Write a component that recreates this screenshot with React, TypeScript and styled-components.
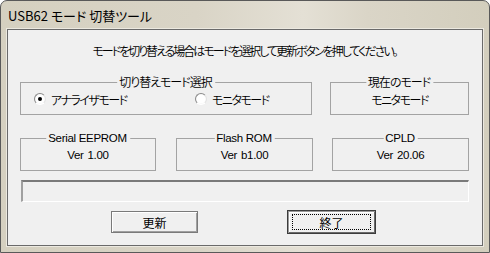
import React from 'react';
import styled, { createGlobalStyle } from 'styled-components';

const GlobalStyle = createGlobalStyle`
  html, body {
    margin: 0;
    padding: 0;
    background: #ffffff;
  }
  body {
    font-family: "Liberation Sans", "Noto Sans CJK JP", sans-serif;
    font-size: 12px;
    color: #000000;
  }
`;

const cjk = `
  font-family: "Noto Sans CJK JP", sans-serif;
  font-feature-settings: 'palt';
  font-weight: 350;
  font-size: 12px;
  letter-spacing: -1.5px;
`;

const latin = `
  font-family: "Liberation Sans", sans-serif;
  font-weight: 400;
  font-size: 11.5px;
  letter-spacing: -0.3px;
`;

const Window = styled.div`
  width: 490px;
  height: 253px;
  box-sizing: border-box;
  border: 1px solid #595959;
  border-radius: 7px 7px 0 0;
  background: linear-gradient(
    to right,
    #d5d0c0 0%,
    #d9d4c6 40%,
    #e4e0d5 62%,
    #dad5c7 75%,
    #d3cebd 100%
  );
  display: flex;
  flex-direction: column;
  overflow: hidden;
`;

const TitleBar = styled.div`
  height: 28px;
  display: flex;
  align-items: center;
  padding-left: 7px;
  font-family: "Noto Sans CJK JP", sans-serif;
  font-feature-settings: 'palt';
  font-size: 13px;
  color: #000;
`;

const Client = styled.div`
  flex: 1;
  margin: 0 6px 6px 6px;
  border: 1px solid #6a6a6a;
  box-shadow: 0 0 0 1px #ece9e0;
  background: #f0f0f0;
  display: flex;
  flex-direction: column;
  padding: 14px 13px 0 12px;
  ${cjk}
`;

const Message = styled.div`
  height: 14px;
  line-height: 14px;
  text-align: center;
  letter-spacing: -2px;
`;

const Row = styled.div<{ $top: number }>`
  display: flex;
  margin-top: ${(p) => p.$top}px;
`;

const GroupBox = styled.div<{ $width: number; $gap?: number }>`
  position: relative;
  width: ${(p) => p.$width}px;
  height: 33px;
  box-sizing: border-box;
  margin-left: ${(p) => p.$gap ?? 0}px;
  border: 1px solid #a3a3a3;
  display: flex;
  align-items: center;
  justify-content: center;
`;

const Caption = styled.span<{ $latin?: boolean }>`
  position: absolute;
  top: -8px;
  left: 50%;
  transform: translateX(-50%);
  padding: 0 3px 0 2px;
  background: #f0f0f0;
  line-height: 14px;
  white-space: nowrap;
  ${(p) => (p.$latin ? latin : `${cjk} letter-spacing: -1px;`)}
`;

const Value = styled.span<{ $latin?: boolean }>`
  padding-top: 1px;
  word-spacing: 1px;
  ${(p) => (p.$latin ? latin : cjk)}
`;

const RadioRow = styled.div`
  width: 100%;
  display: grid;
  grid-template-columns: 161px auto;
  padding-left: 13px;
  padding-top: 1px;
`;

const RadioItem = styled.label`
  display: flex;
  align-items: center;
  gap: 5px;
`;

const RadioCircle = styled.span<{ $checked: boolean }>`
  width: 12px;
  height: 12px;
  box-sizing: border-box;
  border-radius: 50%;
  border: 1px solid;
  border-color: #8a8a8a #e2e2e2 #ffffff #8a8a8a;
  background: radial-gradient(circle at 50% 50%, #ffffff 0 55%, #e4e4e4 100%);
  display: flex;
  align-items: center;
  justify-content: center;

  &::after {
    content: '';
    width: 4px;
    height: 4px;
    border-radius: 50%;
    background: ${(p) => (p.$checked ? '#000' : 'transparent')};
  }
`;

const StatusField = styled.div`
  margin: 9px 0 0 1px;
  width: 448px;
  height: 22px;
  box-sizing: border-box;
  border-style: solid;
  border-width: 2px 1px 1px 2px;
  border-color: #7a7a7a #ffffff #ffffff #a0a0a0;
  background: #f0f0f0;
`;

const ButtonRow = styled.div`
  display: flex;
  align-items: center;
  gap: 90px;
  margin-top: 8px;
  padding-left: 91px;
`;

const Button = styled.button<{ $default?: boolean }>`
  width: ${(p) => (p.$default ? 89 : 87)}px;
  height: ${(p) => (p.$default ? 24 : 22)}px;
  box-sizing: border-box;
  margin: ${(p) => (p.$default ? '0 0 0 -1px' : '0')};
  padding: 0;
  border: 1px solid ${(p) => (p.$default ? '#3c3c3c' : '#7a7a7a')};
  box-shadow: ${(p) =>
    p.$default
      ? 'inset 1px 1px 0 #9a9a9a, inset -1px -1px 0 #6a6a6a, inset 2px 2px 0 #ffffff'
      : 'inset 1px 1px 0 #ffffff, inset -1px -1px 0 #a0a0a0'};
  background: #f0f0f0;
  font-family: "Noto Sans CJK JP", sans-serif;
  font-weight: 400;
  font-size: 12px;
  letter-spacing: 0;
  color: #000;
  display: flex;
  align-items: center;
  justify-content: center;
`;

const FocusRect = styled.span`
  width: 79px;
  height: 16px;
  box-sizing: border-box;
  border: 1px dotted #000;
  display: flex;
  align-items: center;
  justify-content: center;
`;

export default function App(): JSX.Element {
  return (
    <>
      <GlobalStyle />
      <Window>
        <TitleBar>USB62 モード 切替ツール</TitleBar>
        <Client>
          <Message>モードを切り替える場合はモードを選択して更新ボタンを押してください。</Message>
          <Row $top={24}>
            <GroupBox $width={292}>
              <Caption>切り替えモード選択</Caption>
              <RadioRow>
                <RadioItem>
                  <RadioCircle $checked />
                  アナライザモード
                </RadioItem>
                <RadioItem>
                  <RadioCircle $checked={false} />
                  モニタモード
                </RadioItem>
              </RadioRow>
            </GroupBox>
            <GroupBox $width={139} $gap={18}>
              <Caption>現在のモード</Caption>
              <Value>モニタモード</Value>
            </GroupBox>
          </Row>
          <Row $top={23}>
            <GroupBox $width={136}>
              <Caption $latin>Serial EEPROM</Caption>
              <Value $latin>Ver 1.00</Value>
            </GroupBox>
            <GroupBox $width={137} $gap={20}>
              <Caption $latin>Flash ROM</Caption>
              <Value $latin>Ver b1.00</Value>
            </GroupBox>
            <GroupBox $width={137} $gap={19}>
              <Caption $latin>CPLD</Caption>
              <Value $latin>Ver 20.06</Value>
            </GroupBox>
          </Row>
          <StatusField />
          <ButtonRow>
            <Button>更新</Button>
            <Button $default>
              <FocusRect>終了</FocusRect>
            </Button>
          </ButtonRow>
        </Client>
      </Window>
    </>
  );
}
